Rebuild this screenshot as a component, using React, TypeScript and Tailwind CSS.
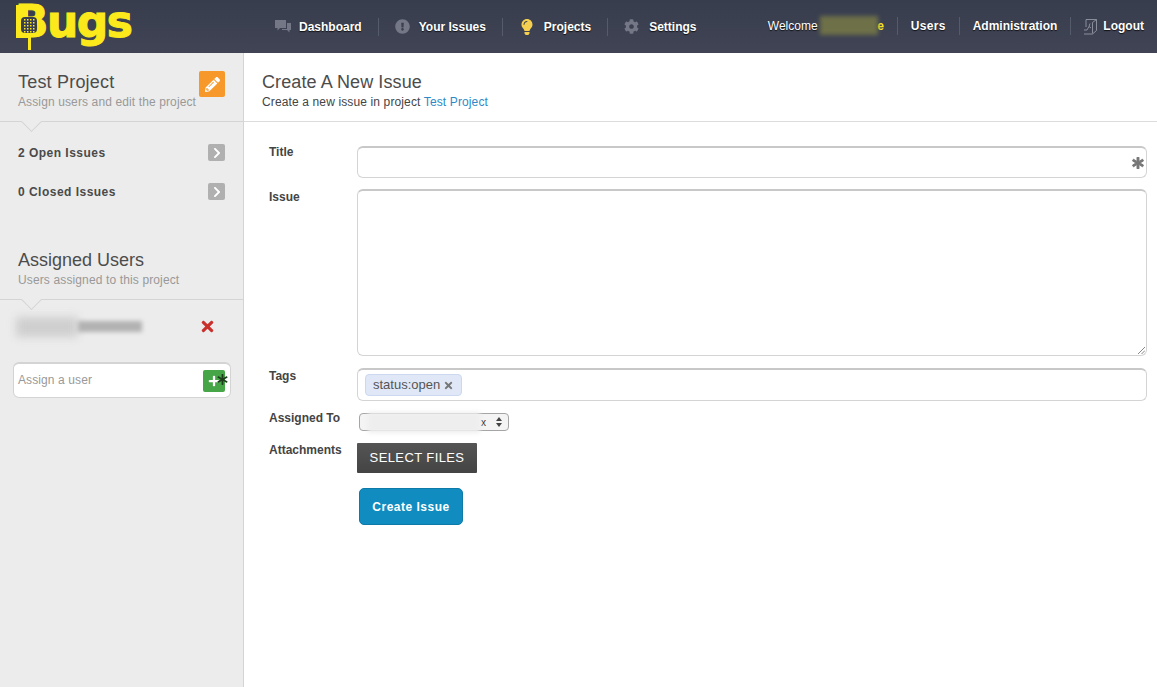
import { FaExclamationCircle, FaLightbulb, FaCog, FaPencilAlt, FaPlus, FaTimes, FaChevronRight, FaAsterisk } from "react-icons/fa";

const Sep = () => <div className="w-px h-[18px] bg-[#565b6b]"></div>;

const NavItem = ({ icon, label, gap = "gap-[10px]" }: { icon: React.ReactNode; label: string; gap?: string }) => (
  <div className={`flex items-center ${gap}`}>
    {icon}
    <span className="text-[12px] font-bold text-white [text-shadow:0_1px_1px_#111]">{label}</span>
  </div>
);

const Logo = () => (
  <div className="relative w-[275px] h-[53px] pl-[15px] shrink-0">
    <span className="block text-[#fbe91c] text-[44px] leading-[44px] font-black tracking-[-1.5px] font-['DejaVu_Sans',sans-serif] [-webkit-text-stroke:1px_#fbe91c]">
      Bugs
    </span>
    <svg className="absolute left-[16px] top-[4px]" width="26" height="46" viewBox="0 0 26 46">
      <rect x="0" y="1" width="12" height="33" fill="#fbe91c" />
      <rect x="5" y="13" width="16" height="16" rx="4" fill="#3a3f50" />
      <g fill="#fbe91c">
        {[8, 11, 14, 17].map((x) =>
          [15, 18, 21, 24, 27].map((y) => <rect key={`${x}-${y}`} x={x} y={y} width="1.5" height="1.5" />)
        )}
      </g>
      <rect x="12" y="29" width="3" height="17" fill="#fbe91c" />
    </svg>
  </div>
);

const Header = () => (
  <header className="h-[53px] bg-[linear-gradient(#383d4e,#404455)] flex items-center font-['Liberation_Sans',sans-serif] shrink-0">
    <Logo />
    <div className="flex items-center gap-[16px]">
      <NavItem
        gap="gap-[8px]"
        label="Dashboard"
        icon={
          <svg width="16" height="14" viewBox="0 0 16 14" fill="#737786">
            <path d="M0 0h11v8H5l-2.5 2.5V8H0z" />
            <path d="M12 3h4v7h-1.5v2.5L12 10H7V9h5z" />
          </svg>
        }
      />
      <Sep />
      <NavItem icon={<FaExclamationCircle size={15} color="#737786" />} label="Your Issues" gap="gap-[9px]" />
      <Sep />
      <NavItem icon={<FaLightbulb size={16} color="#f4cf50" />} label="Projects" gap="gap-[9px]" />
      <Sep />
      <NavItem icon={<FaCog size={15} color="#737786" />} label="Settings" />
    </div>
    <div className="ml-auto pr-[13px] flex items-center gap-[13px] -mt-[1px]">
      <div className="relative flex items-center w-[116px] text-[12px] text-white">
        <span className="[text-shadow:0_1px_1px_#111]">Welcome</span>
        <span className="absolute right-0 font-bold text-[#fbe91c]">e</span>
        <div className="absolute left-[52px] -top-[1px] w-[58px] h-[19px] bg-[#6e7048] blur-[2px]"></div>
      </div>
      <Sep />
      <span className="text-[12px] tracking-[0.3px] font-bold text-white [text-shadow:0_1px_1px_#111]">Users</span>
      <Sep />
      <span className="text-[12px] font-bold text-white [text-shadow:0_1px_1px_#111]">Administration</span>
      <div className="w-px h-[18px] bg-[#565b6b] -mr-px"></div>
      <div className="flex items-center gap-[6px]">
        <svg width="14" height="17" viewBox="0 0 14 17" fill="none" stroke="#8a8e9b" strokeWidth="1">
          <path d="M3 9V1.5h10.5v11l-4 3.5H1" />
          <path d="M13.5 1.5l-4 3v11" />
          <path d="M7 5.5l-1 3 2 1.5M6 8.5l-2 3.5H1" />
        </svg>
        <span className="text-[12px] font-bold text-white [text-shadow:0_1px_1px_#111]">Logout</span>
      </div>
    </div>
  </header>
);

const Caret = () => (
  <div className="relative h-px bg-[#d4d4d4]">
    <div className="absolute left-[24px] -top-[7px] w-[15px] h-[15px] rotate-45 bg-[#ececec] border-r border-b border-[#d4d4d4]"></div>
  </div>
);

const CountRow = ({ label }: { label: string }) => (
  <div className="h-[39px] flex items-center justify-between pl-[18px] pr-[18px]">
    <span className="text-[12px] tracking-[0.48px] font-bold text-[#4a4a4a]">{label}</span>
    <div className="w-[17px] h-[17px] rounded-[2px] bg-[#b0b0b0] flex items-center justify-center">
      <FaChevronRight size={12} color="#ffffff" />
    </div>
  </div>
);

const Sidebar = () => (
  <aside className="w-[244px] shrink-0 bg-[#ececec] border-r border-[#d4d4d4]">
    <div className="h-[68px] px-[18px] pt-[18px] flex justify-between">
      <div>
        <h2 className="text-[18px] tracking-[0.2px] leading-[22px] text-[#4c4c4c]">Test Project</h2>
        <p className="text-[12px] tracking-[0.12px] leading-[18px] text-[#999999]">Assign users and edit the project</p>
      </div>
      <div className="w-[26px] h-[26px] rounded-[2px] bg-[#f7982a] flex items-center justify-center">
        <FaPencilAlt size={15} color="#ffffff" />
      </div>
    </div>
    <Caret />
    <div className="pt-[11px]">
      <CountRow label="2 Open Issues" />
      <CountRow label="0 Closed Issues" />
    </div>
    <div className="mt-[38px] px-[18px] h-[50px]">
      <h2 className="text-[18px] leading-[22px] text-[#4c4c4c]">Assigned Users</h2>
      <p className="text-[12px] tracking-[0.13px] leading-[18px] text-[#999999]">Users assigned to this project</p>
    </div>
    <Caret />
    <div className="h-[62px] pb-[9px] flex items-center justify-between pl-[16px] pr-[27px]">
      <div className="flex items-center">
        <div className="w-[62px] h-[20px] bg-[#cfcfcf] blur-[4px]"></div>
        <div className="w-[64px] h-[11px] bg-[#b2b2b2] blur-[2px]"></div>
      </div>
      <FaTimes size={17} color="#c9302c" />
    </div>
    <div className="ml-[13px] mr-[12px] h-[36px] rounded-[6px] bg-white border border-[#d4d4d4] border-t-2 flex items-center justify-between pl-[4px] pr-[5px]">
      <span className="text-[12px] tracking-[0.1px] -mt-[1px] text-[#999999]">Assign a user</span>
      <div className="relative w-[22px] h-[22px] rounded-[2px] bg-[#46a546] flex items-center justify-center">
        <FaPlus size={12} color="#ffffff" />
        <FaAsterisk size={11} color="#1d3d1d" className="absolute -right-[3px] top-[4px]" />
      </div>
    </div>
  </aside>
);

const Label = ({ children, className = "" }: { children: string; className?: string }) => (
  <label className={`w-[88px] shrink-0 text-[12px] font-bold text-[#444444] leading-[14px] ${className}`}>{children}</label>
);

const inputBox = "flex-1 rounded-[6px] bg-white border border-[#d4d4d4] border-t-2 border-t-[#c8c8c8]";

const Form = () => (
  <div className="pl-[25px] pr-[10px] pt-[24px]">
    <div className="flex">
      <Label className="-mt-[1px]">Title</Label>
      <div className={`${inputBox} h-[32px] relative`}>
        <FaAsterisk size={12} color="#777777" stroke="#777777" strokeWidth={40} className="absolute right-[2px] top-[9px]" />
      </div>
    </div>
    <div className="flex mt-[11px]">
      <Label className="mt-[1px]">Issue</Label>
      <div className={`${inputBox} h-[167px] relative`}>
        <svg className="absolute right-[1px] bottom-[1px]" width="8" height="8" viewBox="0 0 8 8" stroke="#888888">
          <path d="M1 8L8 1M4.5 8L8 4.5" />
        </svg>
      </div>
    </div>
    <div className="flex mt-[12px]">
      <Label className="mt-[1px]">Tags</Label>
      <div className={`${inputBox} h-[33px] flex items-center pl-[7px]`}>
        <div className="h-[22px] px-[7px] rounded-[4px] bg-[#e0e8f8] border border-[#ccd8f0] flex items-center gap-[3px]">
          <span className="text-[13px] text-[#555555]">status:open</span>
          <FaTimes size={11} color="#777777" />
        </div>
      </div>
    </div>
    <div className="flex mt-[12px]">
      <Label className="-mt-[2px]">Assigned To</Label>
      <div className="relative ml-[2px] w-[150px] h-[18px] rounded-[4px] bg-[#f4f4f4] border border-[#a5a5a5] flex items-center justify-end pr-[6px]">
        <span className="absolute left-[121px] text-[10px] text-[#333333]">x</span>
        <svg width="6" height="10" viewBox="0 0 6 10" fill="#444444">
          <path d="M3 0l3 4H0zM3 10l3-4H0z" />
        </svg>
        <div className="absolute left-[8px] -top-[2px] w-[112px] h-[21px] bg-[#eeeeee] blur-[2px]"></div>
      </div>
    </div>
    <div className="flex mt-[12px]">
      <Label>Attachments</Label>
      <button className="w-[120px] h-[30px] bg-[linear-gradient(#555555,#444444)] text-white text-[13px] tracking-[0.4px] rounded-[1px]">
        SELECT FILES
      </button>
    </div>
    <div className="mt-[15px] ml-[90px]">
      <button className="w-[104px] h-[37px] rounded-[5px] bg-[#108cc1] border border-[#0d7aa8] text-white text-[12px] tracking-[0.5px] font-bold">
        Create Issue
      </button>
    </div>
  </div>
);

export default function App() {
  return (
    <div className="h-[687px] w-[1157px] overflow-hidden flex flex-col bg-white font-['Liberation_Sans',sans-serif]">
      <Header />
      <div className="flex flex-1">
        <Sidebar />
        <main className="flex-1">
          <div className="h-[69px] pl-[18px] pt-[18px] border-b border-[#dcdcdc]">
            <h1 className="text-[18px] tracking-[0.1px] leading-[22px] text-[#4c4c4c]">Create A New Issue</h1>
            <p className="text-[12px] tracking-[0.13px] leading-[18px] text-[#444444]">
              Create a new issue in project <span className="text-[#2d8ac7]">Test Project</span>
            </p>
          </div>
          <Form />
        </main>
      </div>
    </div>
  );
}
